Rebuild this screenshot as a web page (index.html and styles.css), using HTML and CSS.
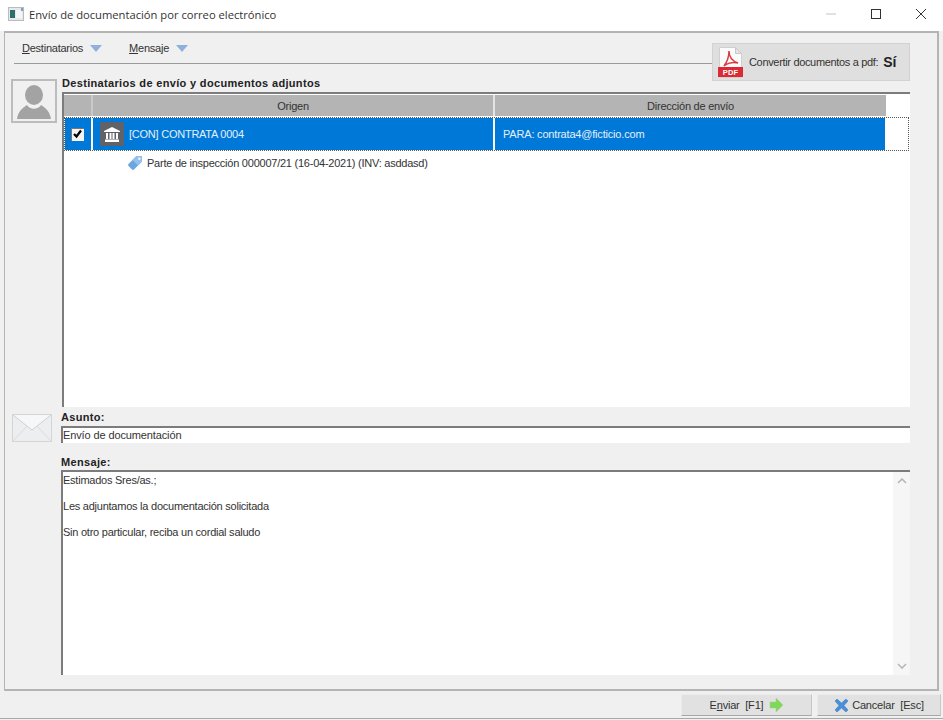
FILE: index.html
```html
<!DOCTYPE html>
<html lang="es">
<head>
<meta charset="utf-8">
<title>Envío de documentación por correo electrónico</title>
<link rel="stylesheet" href="styles.css">
</head>
<body>
<header class="titlebar">
  <svg class="app-icon" width="16" height="14" viewBox="0 0 16 14"><rect x="0.5" y="0.5" width="15" height="13" fill="#e6e8ea" stroke="#b8bcc0"/><rect x="2" y="3" width="5" height="8" fill="#2f6f6a"/><rect x="8" y="3" width="6" height="8" fill="#f4f5f6"/><rect x="13" y="1" width="2" height="3" fill="#7f9fc0"/></svg>
  <span class="title">Envío de documentación por correo electrónico</span>
  <div class="winctl">
    <svg width="12" height="12" viewBox="0 0 12 12"><path d="M1 6h10" stroke="#c4c4c4" stroke-width="1"/></svg>
    <svg width="12" height="12" viewBox="0 0 12 12"><rect x="1.5" y="1.5" width="9" height="9" fill="none" stroke="#333" stroke-width="1"/></svg>
    <svg width="12" height="12" viewBox="0 0 12 12"><path d="M1 1l10 10M11 1L1 11" stroke="#333" stroke-width="1"/></svg>
  </div>
</header>

<main class="panel">
  <div class="top">
    <nav class="menubar">
      <span class="menu"><span><u>D</u>estinatarios</span><svg class="caret" width="12" height="7" viewBox="0 0 12 7"><path d="M0 0h12L6 7z" fill="#8fb0dc"/></svg></span>
      <span class="menu"><span><u>M</u>ensaje</span><svg class="caret" width="12" height="7" viewBox="0 0 12 7"><path d="M0 0h12L6 7z" fill="#8fb0dc"/></svg></span>
    </nav>
    <div class="pdfbtn">
      <svg width="25" height="31" viewBox="0 0 25 31"><path d="M1.500 .5h16l6 6v24h-22z" fill="#fbfbfb" stroke="#d0d0d0"/><path d="M17.500 .5v6h6z" fill="#e4e4e4" stroke="#c9c9c9"/><path d="M11 4c0 5 3 10 9 12-5-1-10 0-14 3 3-4 5-9 5-15z" fill="none" stroke="#dc3a42" stroke-width="1.500"/><rect x="0" y="20" width="25" height="10" fill="#dc2a35"/><text x="12.500" y="28" text-anchor="middle" class="pdftext">PDF</text></svg>
      <span class="pdflabel">Convertir documentos a pdf:</span>
      <b class="pdfval">Sí</b>
    </div>
  </div>

  <section class="recipients">
    <div class="avatar">
      <svg width="36" height="36" viewBox="0 0 36 36"><ellipse cx="18" cy="11" rx="9" ry="10" fill="#a3a3a3"/><path d="M1 35C2 28 6 24 11 21C14 26 22 26 25 21C30 24 34 28 35 35Z" fill="#a3a3a3"/></svg>
    </div>
    <div class="rec-main">
      <h2 class="label heading">Destinatarios de envío y documentos adjuntos</h2>
      <div class="table">
        <div class="thead">
          <div class="th th-check"></div>
          <div class="th th-origin">Origen</div>
          <div class="th th-dir">Dirección de envío</div>
        </div>
        <div class="row">
          <div class="td td-check"><span class="check"><svg width="11" height="10" viewBox="0 0 11 10"><path d="M2 5l2.500 2.500L9 1.500" fill="none" stroke="#000" stroke-width="2.200"/></svg></span></div>
          <div class="td td-origin">
            <span class="bank"><svg width="16" height="15" viewBox="0 0 16 15"><path d="M8 0L16 4v1H0V4z" fill="#fff"/><path d="M2 6h2v6H2zM5.500 6h2v6h-2zM8.500 6h2v6h-2zM12 6h2v6h-2zM1 12.500h14V15H1z" fill="#fff"/></svg></span>
            <span>[CON] CONTRATA 0004</span>
          </div>
          <div class="td td-dir">PARA: contrata4@ficticio.com</div>
        </div>
        <div class="doc">
          <svg width="16" height="16" viewBox="0 0 16 16"><path d="M9.500 1H14a1 1 0 0 1 1 1v4.500L7 14.500a1.500 1.500 0 0 1-2 0L1.500 11a1.500 1.500 0 0 1 0-2z" fill="#6ba6e0"/><path d="M9.500 1H14a1 1 0 0 1 1 1v4.500L11 10.500 5.500 5z" fill="#93c0ec"/><circle cx="12.300" cy="3.700" r="1.300" fill="#eaf3fb"/></svg>
          <span>Parte de inspección 000007/21 (16-04-2021) (INV: asddasd)</span>
        </div>
      </div>
    </div>
  </section>

  <section class="subject">
    <svg class="envelope" width="40" height="28" viewBox="0 0 40 28"><rect x=".5" y=".5" width="39" height="27" fill="#eceeef" stroke="#d2d6d9"/><path d="M1 1l19 15L39 1" fill="#f6f7f8" stroke="#cdd1d4"/><path d="M1 27l14-15M39 27L25 12" stroke="#d9dcdf" stroke-width="1"/></svg>
    <div class="sub-main">
      <label class="label">Asunto:</label>
      <div class="input">Envío de documentación</div>
      <label class="label msg-label">Mensaje:</label>
      <div class="textarea">
        <div class="msg">
          <p>Estimados Sres/as.;</p>
          <p>Les adjuntamos la documentación solicitada</p>
          <p>Sin otro particular, reciba un cordial saludo</p>
        </div>
        <div class="scroll">
          <svg width="10" height="6" viewBox="0 0 10 6"><path d="M1 5l4-4 4 4" fill="none" stroke="#b5b5b5" stroke-width="1.500"/></svg>
          <svg width="10" height="6" viewBox="0 0 10 6"><path d="M1 1l4 4 4-4" fill="none" stroke="#b5b5b5" stroke-width="1.500"/></svg>
        </div>
      </div>
    </div>
  </section>
</main>

<footer class="footer">
  <button class="btn btn-send"><span>E<u>n</u>viar&nbsp; [F1]</span><svg width="14" height="14" viewBox="0 0 14 14"><path d="M1 4h6V0l7 7-7 7v-4H1z" fill="#7ed957" stroke="#a9c99a" stroke-width=".5"/></svg></button>
  <button class="btn btn-cancel"><svg width="15" height="15" viewBox="0 0 15 15"><path d="M1 3l2-2 4.500 4L12 1l2 2-4 4.500 4 4.500-2 2-4.500-4L3 14l-2-2 4-4.500z" fill="#4a90d9" stroke="#2f74bd" stroke-width=".5"/></svg><span>Cancelar&nbsp; [Esc]</span></button>
</footer>
</body>
</html>
```
FILE: styles.css
```css
* { box-sizing: border-box; }
html, body { margin: 0; padding: 0; }
body {
  width: 943px;
  height: 720px;
  overflow: hidden;
  display: flex;
  flex-direction: column;
  background: #f0f0f0;
  font: 11px "Liberation Sans", Arial, sans-serif;
  letter-spacing: -.24px;
  color: #333;
}
.titlebar {
  height: 31px;
  flex: none;
  display: flex;
  align-items: center;
  background: #fff;
  padding: 0 16px 3px 8px;
}
.app-icon { margin-right: 5px; }
.title { font: 11.2px "Open Sans", sans-serif; letter-spacing: 0; color: #333; }
.winctl { margin-left: auto; display: flex; gap: 33px; }

.panel {
  flex: none;
  height: 660px;
  margin: 0 4px;
  border: 1px solid #b4b4b4;
  border-width: 2px 2px 2px 1px;
  background: #f0f0f0;
}
.top {
  display: flex;
  height: 43px;
  align-items: flex-start;
}
.menubar {
  width: 698px;
  margin-left: 9px;
  margin-top: 0;
  height: 31px;
  border-bottom: 1px solid #9a9a9a;
  display: flex;
  align-items: center;
  padding: 0 0 0 8px;
  gap: 27px;
}
.menu { display: inline-flex; align-items: center; color: #333; }
.caret { margin-left: 7px; }
.pdfbtn {
  width: 198px;
  height: 38px;
  margin-top: 10px;
  flex: none;
  display: flex;
  align-items: center;
  padding-left: 5px;
  background: #dfdfdf;
  border: 1px solid #d2d2d2;
}
.pdftext { font: bold 7.5px "Liberation Sans", sans-serif; letter-spacing: .2px; fill: #fff; }
.pdflabel { margin-left: 6px; color: #333; white-space: nowrap; letter-spacing: -.33px; }
.pdfval { margin-left: 5px; font-size: 14px; letter-spacing: 0; color: #222; }

.recipients {
  display: flex;
  padding-left: 6px;
}
.avatar {
  width: 46px;
  height: 44px;
  margin-top: 3px;
  flex: none;
  background: #f0f0f0;
  border: 2px solid #bcbcbc;
  display: flex;
  align-items: flex-end;
  justify-content: center;
  padding-bottom: 1px;
}
.rec-main { margin-left: 5px; }
.label {
  display: block;
  font: bold 11px "Liberation Sans", sans-serif;
  letter-spacing: .33px;
  color: #222;
  margin: 0;
}
.heading { height: 16px; line-height: 15px; }
.table {
  width: 848px;
  height: 315px;
  background: #fff;
  border-top: 2px solid #7c7c7c;
  border-left: 2px solid #7c7c7c;
  padding-top: 1px;
}
.thead { display: flex; height: 21px; width: 822px; background: #b4b4b4; }
.th { line-height: 22px; text-align: center; color: #333; }
.th-check { width: 29px; border-right: 2px solid #c9c9c9; }
.th-origin { width: 402px; border-right: 2px solid #e4e4e4; }
.th-dir { flex: 1; }
.row {
  display: flex;
  height: 34px;
  margin-top: 1px;
  width: 845px;
  border: 1px dotted #555;
  color: #fff;
}
.td { background: #0078d7; height: 32px; display: flex; align-items: center; }
.td-check { width: 26px; justify-content: center; padding-right: 1px; }
.td-origin { width: 400px; margin-left: 2px; padding-left: 7px; gap: 5px; color: #e4f0fb; }
.td-dir { width: 390px; margin-left: 2px; padding-left: 8px; color: #e4f0fb; letter-spacing: -.19px; }
.check {
  width: 13px;
  height: 13px;
  background: #f4f4f4;
  box-shadow: inset 1px 1px 0 #777;
  display: flex;
  align-items: center;
  justify-content: center;
}
.bank {
  width: 24px;
  height: 24px;
  background: #5f6367;
  display: flex;
  align-items: center;
  justify-content: center;
}
.doc {
  display: flex;
  align-items: center;
  height: 22px;
  margin-top: 1px;
  padding-left: 63px;
  gap: 4px;
  color: #333;
}

.subject {
  display: flex;
  padding-left: 7px;
  margin-top: 4px;
}
.envelope { margin-top: 3px; flex: none; }
.sub-main { margin-left: 9px; }
.input {
  width: 849px;
  height: 17px;
  margin-top: 3px;
  background: #fff;
  border-top: 2px solid #7c7c7c;
  border-left: 2px solid #7c7c7c;
  line-height: 15px;
  letter-spacing: -.12px;
  color: #333;
}
.msg-label { margin-top: 13px; }
.textarea {
  width: 849px;
  height: 205px;
  margin-top: 2px;
  background: #fff;
  border-top: 2px solid #7c7c7c;
  border-left: 2px solid #7c7c7c;
  display: flex;
}
.msg { flex: 1; padding: 2px 0 0 0; }
.msg p { margin: 0 0 13px; line-height: 13px; }
.scroll {
  width: 17px;
  background: #f6f6f6;
  display: flex;
  flex-direction: column;
  justify-content: space-between;
  align-items: center;
  padding: 6px 0;
}

.footer {
  flex: none;
  height: 28px;
  display: flex;
  justify-content: flex-end;
  align-items: flex-start;
  gap: 5px;
  padding: 3px 2px 0 0;
  border-bottom: 1px solid #a8a8a8;
}
.btn {
  height: 22px;
  padding: 0;
  display: inline-flex;
  align-items: center;
  justify-content: center;
  gap: 6px;
  background: #e1e1e1;
  border: 1px solid #c8c8c8;
  border-top-color: #ececec;
  border-left-color: #ececec;
  border-bottom-color: #a8a8a8;
  font: 11px "Liberation Sans", sans-serif;
  letter-spacing: -.2px;
  color: #333;
}
.btn-send { width: 131px; }
.btn-cancel { width: 124px; gap: 3px; }
```
